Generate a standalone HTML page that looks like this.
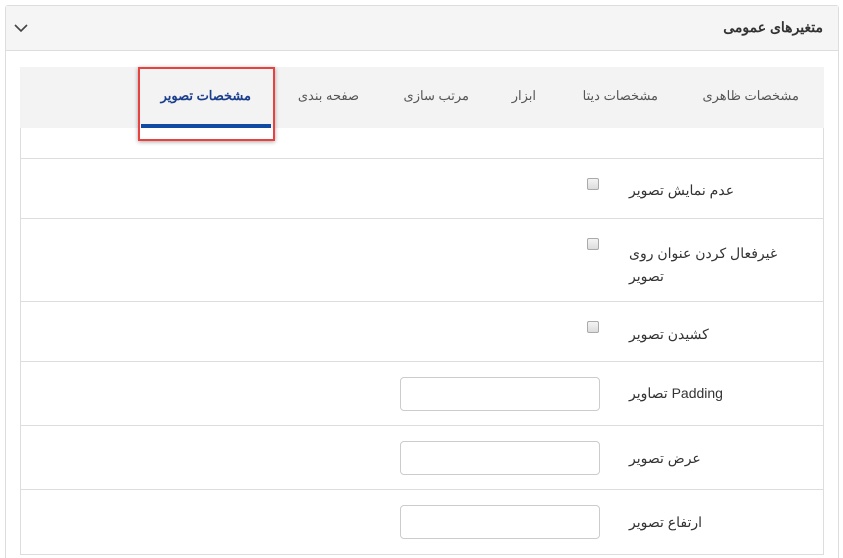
<!DOCTYPE html>
<html style="width:843px;height:558px;overflow:hidden"><head><meta charset="utf-8"><style>
*{box-sizing:border-box;margin:0;padding:0}
body{width:843px;height:558px;background:#fff;position:relative;overflow:hidden;font-family:"Liberation Sans","Noto Sans CJK SC",sans-serif;color:#333}
.a{position:absolute}
.lbl{position:absolute;left:629px;font-size:14px;color:#333;direction:rtl;text-align:left;white-space:nowrap}
.hr{position:absolute;left:20px;width:803px;height:1px;background:#ddd}
.cb{position:absolute;left:587px;width:12px;height:12px;border:1px solid #aaa;border-radius:2px;background:linear-gradient(#f4f4f4,#dcdcdc)}
.in{position:absolute;left:400px;width:200px;height:34px;border:1px solid #ccc;border-radius:4px;background:#fff}
.tab{position:absolute;top:88px;font-size:13px;color:#555;white-space:nowrap;direction:rtl}
</style></head><body>
<div class="a" style="left:5px;top:5px;width:834px;height:553px;border:1px solid #ddd;border-bottom:none;border-radius:3px 3px 0 0"></div>
<div class="a" style="left:6px;top:6px;width:832px;height:45px;background:#f5f5f5;border-bottom:1px solid #ddd"></div>
<svg class="a" style="left:14px;top:24px" width="14" height="9"><path d="M1 1 L7 7 L13 1" fill="none" stroke="#444" stroke-width="1.6"/></svg>
<div class="a" style="right:20px;top:19px;font-size:14px;font-weight:bold;color:#333;direction:rtl">متغیرهای عمومی</div>
<div class="a" style="left:20px;top:67px;width:804px;height:488px;border:1px solid #ddd;border-top:none"></div>
<div class="a" style="left:20px;top:67px;width:804px;height:61px;background:#f3f3f3"></div>
<div class="tab" style="right:44px">مشخصات ظاهری</div>
<div class="tab" style="right:185px">مشخصات دیتا</div>
<div class="tab" style="right:307px">ابزار</div>
<div class="tab" style="right:374px">مرتب سازی</div>
<div class="tab" style="right:484px">صفحه بندی</div>
<div class="tab" style="right:592px;color:#1a3e8c;font-weight:bold">مشخصات تصویر</div>
<div class="a" style="left:141px;top:124px;width:130px;height:4px;background:#0f4ba3"></div>
<div class="a" style="left:138px;top:67px;width:137px;height:74px;border:2px solid #e8413f;box-shadow:0 1px 4px rgba(0,0,0,.35)"></div>
<div class="hr" style="top:158px"></div>
<div class="hr" style="top:218px"></div>
<div class="hr" style="top:301px"></div>
<div class="hr" style="top:361px"></div>
<div class="hr" style="top:425px"></div>
<div class="hr" style="top:489px"></div>
<div class="cb" style="top:178px"></div>
<div class="lbl" style="top:182px">عدم نمایش تصویر</div>
<div class="cb" style="top:238px"></div>
<div class="lbl" style="top:242px;line-height:23px">غیرفعال کردن عنوان روی<br>تصویر</div>
<div class="cb" style="top:321px"></div>
<div class="lbl" style="top:326px">کشیدن تصویر</div>
<div class="in" style="top:377px"></div>
<div class="lbl" style="top:385px">Padding تصاویر</div>
<div class="in" style="top:441px"></div>
<div class="lbl" style="top:450px">عرض تصویر</div>
<div class="in" style="top:505px"></div>
<div class="lbl" style="top:514px">ارتفاع تصویر</div>
</body></html>
